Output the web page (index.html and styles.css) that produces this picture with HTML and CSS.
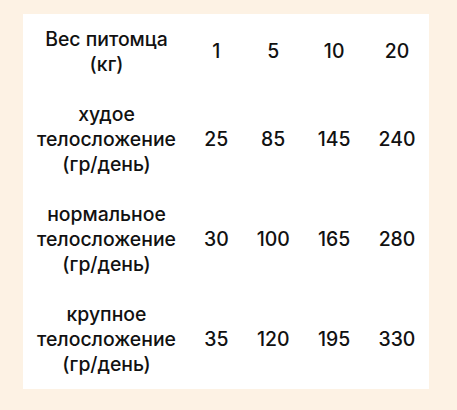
FILE: index.html
```html
<!DOCTYPE html>
<html lang="ru">
<head>
<meta charset="utf-8">
<link rel="stylesheet" href="styles.css">
</head>
<body>
<div class="card">
<table class="feed">
<tr><td class="label">Вес питомца<br>(кг)</td><td>1</td><td>5</td><td>10</td><td>20</td></tr>
<tr><td class="label">худое<br>телосложение<br>(гр/день)</td><td>25</td><td>85</td><td>145</td><td>240</td></tr>
<tr><td class="label">нормальное<br>телосложение<br>(гр/день)</td><td>30</td><td>100</td><td>165</td><td>280</td></tr>
<tr><td class="label">крупное<br>телосложение<br>(гр/день)</td><td>35</td><td>120</td><td>195</td><td>330</td></tr>
</table>
</div>
</body>
</html>
```
FILE: styles.css
```css
html, body {
  margin: 0;
  padding: 0;
  background: #fdf2e4;
}
body {
  padding: 14px 0 0 23px;
  font-family: Inter, "Noto Sans", sans-serif;
  color: #111;
}
.card {
  display: inline-block;
  background: #fff;
}
.feed {
  border-collapse: collapse;
  font-size: 19.4px;
  font-weight: 500;
  line-height: 25px;
}
.feed td {
  padding: 12.5px 14px;
  text-align: center;
  vertical-align: middle;
}
```
